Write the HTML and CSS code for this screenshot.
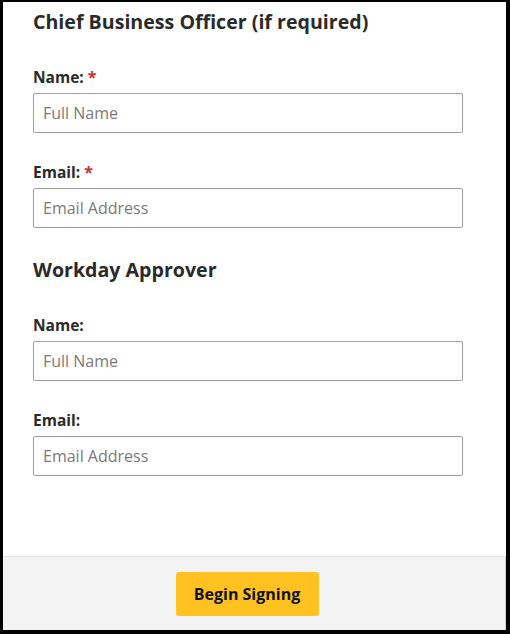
FILE: index.html
```html
<!DOCTYPE html>
<html lang="en">
<head>
    <meta charset="UTF-8">
    <title>Signers</title>
    <link rel="stylesheet" href="styles.css">
</head>
<body>
    <div class="frame">
        <form class="signers">
            <h2 class="group-title">Chief Business Officer (if required)</h2>
            <div class="field first">
                <label for="cbo-name">Name: <span class="req">*</span></label>
                <input id="cbo-name" type="text" placeholder="Full Name">
            </div>
            <div class="field">
                <label for="cbo-email">Email: <span class="req">*</span></label>
                <input id="cbo-email" type="email" placeholder="Email Address">
            </div>

            <h2 class="group-title second">Workday Approver</h2>
            <div class="field first later">
                <label for="wd-name">Name:</label>
                <input id="wd-name" type="text" placeholder="Full Name">
            </div>
            <div class="field">
                <label for="wd-email">Email:</label>
                <input id="wd-email" type="email" placeholder="Email Address">
            </div>
        </form>
        <div class="footer">
            <button type="button" class="begin">Begin Signing</button>
        </div>
    </div>
</body>
</html>
```

FILE: styles.css
```css
* {
    font-family: "Open Sans", "Lato", sans-serif;
    margin: 0;
    box-sizing: border-box;
}
body {
    background: #000;
}
.frame {
    height: 100vh;
    display: flex;
    flex-direction: column;
    border-style: solid;
    border-color: #000;
    border-width: 2px 4px 4px 3px;
    background: #fff;
}
.signers {
    flex: 1;
    padding: 8px 43px 0 30px;
}
.group-title {
    font-size: 19.6px;
    line-height: 24px;
    font-weight: 700;
    color: #2a2a2a;
}
.group-title.second {
    margin-top: 30px;
}
.field {
    margin-top: 29px;
    display: flex;
    flex-direction: column;
    gap: 6px;
}
.field.first {
    margin-top: 33px;
}
.field.first.later {
    margin-top: 33px;
}
label {
    font-size: 15.5px;
    line-height: 20px;
    font-weight: 700;
    color: #2a2a2a;
}
.req {
    color: #d9262c;
    font-size: 16px;
    line-height: 16px;
}
input {
    width: 430px;
    height: 40px;
    border: 1px solid #9e9e9e;
    border-radius: 2px;
    padding: 0 9px;
    font-size: 16px;
    color: #333;
}
input::placeholder {
    color: #7a7a7a;
}
.footer {
    height: 74px;
    border-top: 1px solid #e6e6e6;
    border-right: 1px solid #d0d0d0;
    background: #f3f3f3;
    display: flex;
    justify-content: center;
    align-items: center;
    padding-right: 14px;
}
.begin {
    width: 143px;
    height: 44px;
    border: none;
    border-radius: 3px;
    background: #ffc220;
    color: #111;
    font-size: 16px;
    font-weight: 700;
}
```
